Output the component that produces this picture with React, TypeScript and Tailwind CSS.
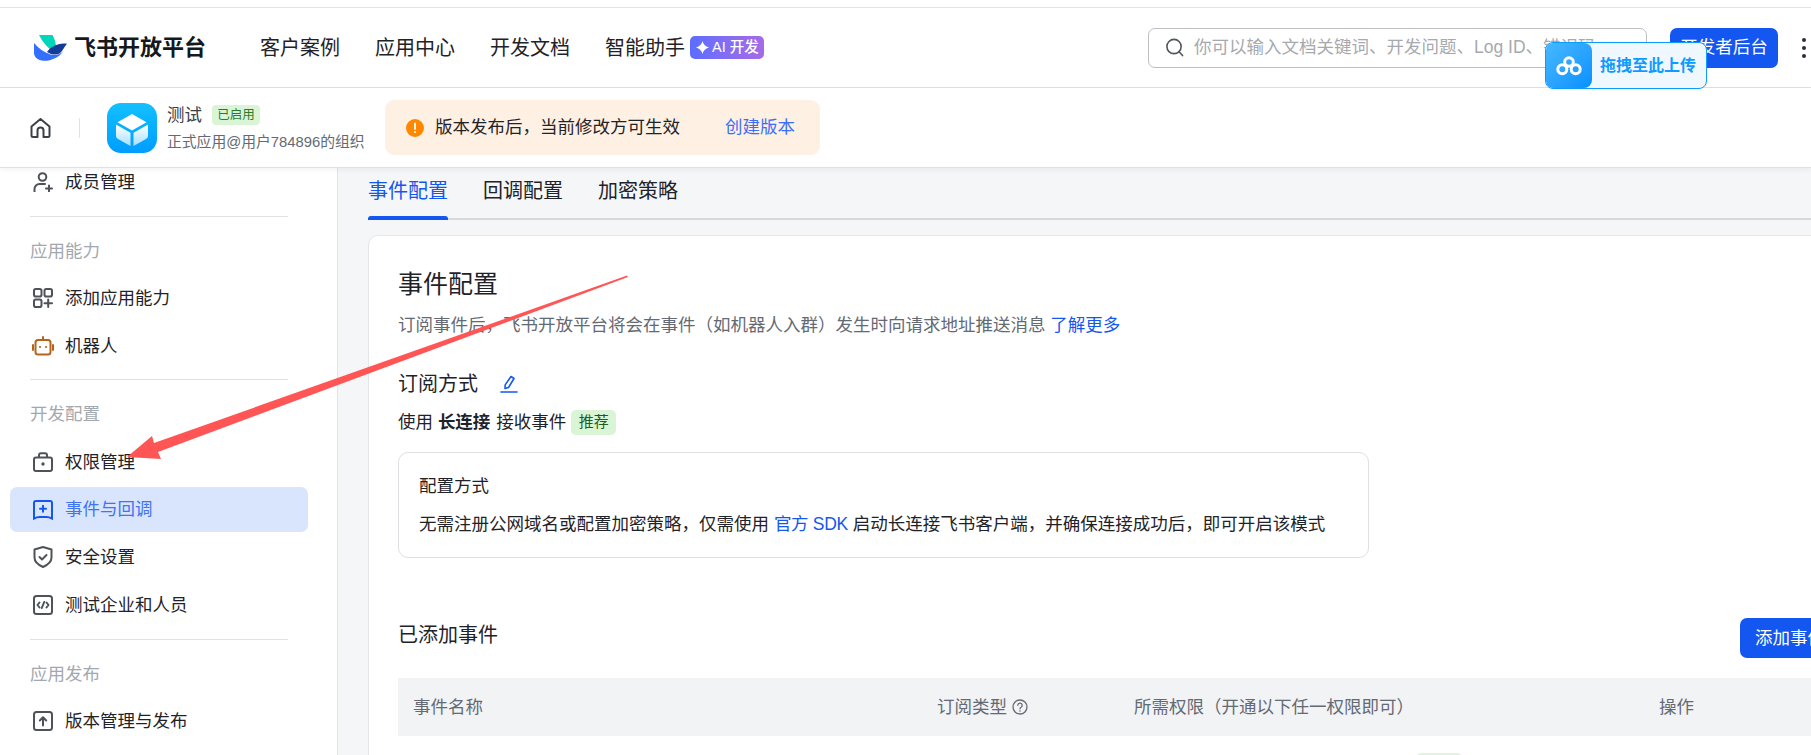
import React from 'react';

const iconCls = 'w-5 h-5 shrink-0 fill-none stroke-[#4e535a] stroke-2';

const MemberIcon = () => (
  <svg viewBox="0 0 20 20" className={iconCls} strokeLinecap="round">
    <circle cx="9.5" cy="5" r="3.8" />
    <path d="M1.5 19.5v-2.5a5 5 0 0 1 5-5h5.5" />
    <path d="M16 13.5v6M13 16.5h6" />
  </svg>
);
const AbilityIcon = () => (
  <svg viewBox="0 0 20 20" className={iconCls} strokeLinecap="round">
    <rect x="1" y="1" width="7.5" height="7.5" rx="1.8" />
    <rect x="11.5" y="1" width="7.5" height="7.5" rx="1.8" />
    <rect x="1" y="11.5" width="7.5" height="7.5" rx="1.8" />
    <path d="M15.2 11.5v7.5M11.5 15.2h7.5" />
  </svg>
);
const RobotIcon = () => (
  <svg viewBox="0 0 22 20" className="w-[22px] h-5 -ml-px -mr-px shrink-0 fill-none stroke-[#b4641c] stroke-2">
    <rect x="3.5" y="4" width="15" height="14.5" rx="2.5" />
    <path d="M11 1v3M1 9v5M21 9v5" strokeLinecap="round" />
    <circle cx="8" cy="11" r="1.1" className="fill-[#b4641c] stroke-none" />
    <circle cx="14" cy="11" r="1.1" className="fill-[#b4641c] stroke-none" />
  </svg>
);
const LockIcon = () => (
  <svg viewBox="0 0 20 20" className={iconCls}>
    <rect x="1" y="5.5" width="18" height="13.5" rx="2" />
    <path d="M6 5.5V3.3A2 2 0 0 1 8 1.3h4a2 2 0 0 1 2 2v2.2" />
    <circle cx="10" cy="12" r="1.7" className="fill-[#4e535a] stroke-none" />
  </svg>
);
const EventIcon = () => (
  <svg viewBox="0 0 20 20" className="w-5 h-5 shrink-0 fill-none stroke-[#1456f0] stroke-2" strokeLinecap="round">
    <path d="M3 1h14a2 2 0 0 1 2 2v15.5c-2-1-4-1.5-5.500-1.500h-7C5 17 3 17.500 1 18.500V3a2 2 0 0 1 2-2z" />
    <path d="M10 5.800v6M7 8.800h6" />
  </svg>
);
const ShieldIcon = () => (
  <svg viewBox="0 0 20 22" className="w-5 h-[22px] shrink-0 fill-none stroke-[#4e535a] stroke-2" strokeLinecap="round" strokeLinejoin="round">
    <path d="M10 1l8.500 2.500v8c0 4.500-4 7.500-8.500 9.500-4.500-2-8.500-5-8.500-9.500v-8z" />
    <path d="M6.500 11l2.500 2.500 4.500-4.500" />
  </svg>
);
const CodeIcon = () => (
  <svg viewBox="0 0 20 20" className={iconCls} strokeLinecap="round" strokeLinejoin="round">
    <rect x="1" y="1" width="18" height="18" rx="2.500" />
    <path d="M6.500 7.500L4.500 10l2 2.500M13.500 7.500l2 2.500-2 2.500M11.200 7l-2.400 6" />
  </svg>
);
const UploadIcon = () => (
  <svg viewBox="0 0 20 20" className={iconCls} strokeLinecap="round" strokeLinejoin="round">
    <rect x="1" y="1" width="18" height="18" rx="2.500" />
    <path d="M10 14.500V6.500M6.800 9.500L10 6.200l3.200 3.300" />
  </svg>
);

const Divider = () => <div className="h-px mx-5 mt-[11px] mb-[22px] bg-[#dfe1e4] shrink-0" />;

const SideItem = ({ icon, label, active }: { icon: React.ReactNode; label: string; active?: boolean }) => (
  <div
    className={`flex items-center gap-3 h-[45px] w-[298px] pl-[23px] rounded-[7px] text-[17.5px] shrink-0 ${
      active ? 'bg-[#d9e5fd] text-[#3f74f5]' : 'text-[#1f2329]'
    }`}
  >
    {icon}
    <span>{label}</span>
  </div>
);

const SideGroup = ({ title, children }: { title: string; children: React.ReactNode }) => (
  <>
    <div className="h-[25px] leading-[25px] mb-3 pl-5 text-[17.5px] text-[#a3a8af] shrink-0">{title}</div>
    <div className="flex flex-col gap-[2.75px]">{children}</div>
  </>
);

export default function App() {
  return (
    <div className="relative flex flex-col w-[1811px] h-[755px] overflow-hidden bg-white text-[#1f2329] font-['Liberation_Sans','Noto_Sans_CJK_SC',sans-serif]">
      {/* browser strip */}
      <div className="h-2 shrink-0 border-b border-[#e3e3e3]" />

      {/* top nav */}
      <header className="flex items-center h-20 shrink-0 border-b border-[#dfe0e2] pl-[34px] pr-[5px]">
        <svg viewBox="0 0 33 26" className="w-[33px] h-[26px] shrink-0">
          <path d="M5 0h13.500c2 3.500 3 7 3.500 10.500-1.500 1.500-3 3.500-4.500 5C12.500 11.500 8 6 5 0z" fill="#00d6b9" />
          <path d="M0 8c4.500 5 10 9.500 16.500 11.500 5 1.500 9.500 0 13-3.500-4.500 6.500-12 10-20 9.800C4 25.500 0 22 0 18z" fill="#3370ff" />
          <path d="M13 17c4-5.500 11.500-9.500 20-8.200-2.500 2.500-4 7-7.500 9.700-3.500 2-8.500 1.200-12.500-1.500z" fill="#133c9a" />
        </svg>
        <span className="ml-[7px] w-[132px] text-[22px] font-bold whitespace-nowrap text-[#15181c]">飞书开放平台</span>
        <nav className="flex items-center gap-[35px] ml-[54px] text-[20px] whitespace-nowrap">
          <span>客户案例</span>
          <span>应用中心</span>
          <span>开发文档</span>
          <span className="flex items-center">
            智能助手
            <span className="flex items-center gap-[3px] ml-[5px] w-[74px] h-[23px] pl-[6px] rounded-[5px] bg-gradient-to-r from-[#5a6dff] to-[#a66ae6] text-white text-[14.5px] font-medium">
              <svg viewBox="0 0 12 12" className="w-[13px] h-[13px] shrink-0 fill-white">
                <path d="M6 0c.7 3 2.500 5 6 6-3.500 1-5.300 3-6 6-.7-3-2.500-5-6-6 3.500-1 5.300-3 6-6z" />
              </svg>
              AI 开发
            </span>
          </span>
        </nav>
        <div className="flex items-center ml-auto w-[499px] h-10 pl-4 pr-2 rounded-[7px] border border-[#bbbfc4] overflow-hidden">
          <svg viewBox="0 0 20 20" className="w-[19px] h-[19px] shrink-0 fill-none stroke-[#51565d] stroke-[1.7]" strokeLinecap="round">
            <circle cx="9.500" cy="9" r="7.500" />
            <path d="M14.800 14.500l3.700 4" />
          </svg>
          <span className="ml-2.5 text-[17.5px] text-[#a6a9ae] whitespace-nowrap">你可以输入文档关键词、开发问题、Log ID、错误码</span>
        </div>
        <button className="flex items-center justify-center ml-[23px] w-[108px] h-10 rounded-[7px] bg-[#1456f0] text-white text-[17.5px] whitespace-nowrap">开发者后台</button>
        <div className="flex flex-col gap-1 ml-[24px] shrink-0">
          <span className="w-1 h-1 rounded-full bg-[#2b2f36]" />
          <span className="w-1 h-1 rounded-full bg-[#2b2f36]" />
          <span className="w-1 h-1 rounded-full bg-[#2b2f36]" />
        </div>
      </header>

      {/* app bar */}
      <div className="relative z-10 flex items-center h-20 shrink-0 border-b border-[#dfe0e2] pl-[30px] bg-white shadow-[0_2px_6px_rgba(0,0,0,0.05)]">
        <svg viewBox="0 0 21 20" className="w-[21px] h-5 shrink-0 fill-none stroke-[#3b4048] stroke-2" strokeLinejoin="round">
          <path d="M1.500 8.500L10.500 1l9 7.500V17.500a1.500 1.500 0 0 1-1.500 1.500h-4.500v-6.500a3 3 0 0 0-6 0V19H3a1.500 1.500 0 0 1-1.500-1.500z" />
        </svg>
        <div className="ml-[28px] w-px h-5 bg-[#dfe1e4] shrink-0" />
        <div className="ml-[27px] w-[50px] h-[50px] rounded-[14px] bg-gradient-to-b from-[#14c0ff] to-[#009dff] shrink-0">
          <svg viewBox="0 0 50 50" className="w-[50px] h-[50px]">
            <defs>
              <linearGradient id="cubeFace" x1="0" y1="0" x2="0" y2="1">
                <stop offset="0" stopColor="#ffffff" />
                <stop offset="1" stopColor="#a8e0ff" />
              </linearGradient>
            </defs>
            <path d="M25 11l14.500 8.200L25 27.500l-14.500-8.300z" fill="#fff" />
            <path d="M9 21.500l14.500 8.300V43L11 36a3.500 3.500 0 0 1-2-3z" fill="url(#cubeFace)" />
            <path d="M41 21.500l-14.500 8.300V43L39 36a3.500 3.500 0 0 0 2-3z" fill="url(#cubeFace)" />
          </svg>
        </div>
        <div className="ml-[10px] w-[208px] flex flex-col gap-[3px] pt-[2px]">
          <div className="flex items-center gap-[10px] h-5">
            <span className="text-[17.5px] text-[#3b4048]">测试</span>
            <span className="flex items-center justify-center w-12 h-5 rounded-[4px] bg-[#d9f5d6] text-[#2c7a2a] text-[12.5px]">已启用</span>
          </div>
          <span className="text-[14.8px] leading-5 mt-[4px] text-[#646a73] whitespace-nowrap">正式应用@用户784896的组织</span>
        </div>
        <div className="flex items-center ml-[10px] w-[435px] h-[55px] pl-[21px] rounded-[9px] bg-[#fef1e3] text-[17.5px] whitespace-nowrap">
          <svg viewBox="0 0 18 18" className="w-[18px] h-[18px] shrink-0">
            <circle cx="9" cy="9" r="9" fill="#ff8800" />
            <path d="M9 4.500v5.500" stroke="#fff" strokeWidth="1.800" strokeLinecap="round" />
            <circle cx="9" cy="13" r="1.100" fill="#fff" />
          </svg>
          <span className="ml-[11px] w-[290px]">版本发布后，当前修改方可生效</span>
          <span className="text-[#3b6ff5]">创建版本</span>
        </div>
      </div>

      <div className="flex flex-1 min-h-0">
        {/* sidebar */}
        <aside className="flex flex-col w-[338px] shrink-0 pl-[10px] border-r border-[#e3e5e8] overflow-hidden bg-white">
          <div className="-mt-[8.5px] flex flex-col">
            <SideItem icon={<MemberIcon />} label="成员管理" />
            <div className="w-[298px]"><Divider /></div>
            <SideGroup title="应用能力">
              <SideItem icon={<AbilityIcon />} label="添加应用能力" />
              <SideItem icon={<RobotIcon />} label="机器人" />
            </SideGroup>
            <div className="w-[298px]"><Divider /></div>
            <SideGroup title="开发配置">
              <SideItem icon={<LockIcon />} label="权限管理" />
              <SideItem icon={<EventIcon />} label="事件与回调" active />
              <SideItem icon={<ShieldIcon />} label="安全设置" />
              <SideItem icon={<CodeIcon />} label="测试企业和人员" />
            </SideGroup>
            <div className="w-[298px]"><Divider /></div>
            <SideGroup title="应用发布">
              <SideItem icon={<UploadIcon />} label="版本管理与发布" />
            </SideGroup>
            <div className="w-[298px]"><Divider /></div>
          </div>
        </aside>

        {/* content */}
        <main className="flex-1 min-w-0 pl-[30px] bg-[#f5f6f7] overflow-hidden">
          <div className="flex gap-[35px] h-[52px] border-b-2 border-[#d5d8dc] text-[20px]">
            <div className="relative pt-2.5 leading-[26px] text-[#1456f0]">
              事件配置
              <span className="absolute left-0 right-0 -bottom-[2px] h-1 rounded-t-[3px] bg-[#1456f0]" />
            </div>
            <div className="pt-2.5 leading-[26px]">回调配置</div>
            <div className="pt-2.5 leading-[26px]">加密策略</div>
          </div>

          <section className="w-[1501px] mt-[15px] pl-[29px] pt-[30px] h-[600px] bg-white border border-[#e4e6e9] rounded-[10px]">
            <h1 className="text-[25px] leading-9">事件配置</h1>
            <p className="mt-2.5 text-[17.5px] leading-[26px] text-[#646a73]">
              订阅事件后，飞书开放平台将会在事件（如机器人入群）发生时向请求地址推送消息 <span className="text-[#1456f0]">了解更多</span>
            </p>
            <div className="flex items-center gap-[22px] mt-8 h-7">
              <h2 className="text-[20px] leading-7">订阅方式</h2>
              <svg viewBox="0 0 18 18" className="w-[18px] h-[18px] fill-none stroke-[#1456f0] stroke-[1.6]" strokeLinejoin="round">
                <path d="M11 1.500l3 2-5.500 9-3.500 1 .2-3.600z" />
                <path d="M1 17h16" strokeLinecap="round" />
              </svg>
            </div>
            <div className="flex items-center h-[25px] mt-3 text-[17.5px] whitespace-pre">
              <span>使用 </span>
              <span className="font-bold">长连接</span>
              <span className="ml-px"> 接收事件</span>
              <span className="flex items-center justify-center ml-[5px] w-[45px] h-[25px] rounded-[5px] bg-[#d9f5d6] text-[#1f5c1f] text-[15px]">推荐</span>
            </div>

            <div className="w-[971px] h-[106px] mt-[17px] pl-5 pt-5 border border-[#dee0e3] rounded-[10px] text-[17.5px] leading-[26px]">
              <div>配置方式</div>
              <div className="mt-3 whitespace-nowrap">
                无需注册公网域名或配置加密策略，仅需使用 <span className="text-[#1456f0] tracking-[-0.3px]">官方 SDK</span> 启动长连接飞书客户端，并确保连接成功后，即可开启该模式
              </div>
            </div>

            <div className="flex justify-between items-start w-[1442px] mt-[60px]">
              <h2 className="mt-[3px] text-[20px] leading-7">已添加事件</h2>
              <button className="w-[100px] h-10 rounded-[7px] bg-[#1456f0] text-white text-[17.5px] whitespace-nowrap">添加事件</button>
            </div>

            <div className="flex items-center w-[1442px] h-[58px] mt-5 pl-[15px] bg-[#f2f3f5] text-[17.5px] text-[#646a73] whitespace-nowrap">
              <div className="w-[524px]">事件名称</div>
              <div className="flex items-center gap-[5px] w-[197px]">
                订阅类型
                <svg viewBox="0 0 16 16" className="w-4 h-4 fill-none stroke-[#646a73] stroke-[1.3]" strokeLinecap="round">
                  <circle cx="8" cy="8" r="7" />
                  <path d="M5.800 6.300a2.200 2.200 0 1 1 3.300 1.900c-.7.400-1.100.8-1.100 1.600" />
                  <circle cx="8" cy="12" r=".8" className="fill-[#646a73] stroke-none" />
                </svg>
              </div>
              <div className="w-[525px]">所需权限（开通以下任一权限即可）</div>
              <div>操作</div>
            </div>
            <div className="ml-[1018px] mt-[17px] w-[46px] h-[25px] rounded-[5px] bg-[#dff5dc]" />
          </section>
        </main>
      </div>

      {/* upload widget floating over the header */}
      <div className="absolute left-[1545px] top-[42px] z-20 flex items-center w-[162px] h-[47px] rounded-[8px] border border-[#0d9bff] bg-[#f0f8ff] overflow-hidden">
        <div className="flex items-center justify-center w-[46px] h-full rounded-r-[8px] bg-gradient-to-br from-[#45b8ff] to-[#0090ff] shrink-0">
          <svg viewBox="0 0 26 20" className="w-[26px] h-5 fill-none stroke-white stroke-[3]">
            <circle cx="13" cy="6" r="4.300" />
            <circle cx="6.300" cy="13.300" r="4.500" />
            <circle cx="19.700" cy="13.300" r="4.500" />
          </svg>
        </div>
        <span className="ml-[8px] text-[16px] font-bold text-[#0d9bff] whitespace-nowrap">拖拽至此上传</span>
      </div>

      {/* red annotation arrow */}
      <svg viewBox="0 0 1811 755" className="absolute inset-0 z-30 w-[1811px] h-[755px] pointer-events-none">
        <polygon points="127,457 152,436 154,443 627,275.500 628,277 158,452 161,459" fill="#ff5555" />
      </svg>
    </div>
  );
}
